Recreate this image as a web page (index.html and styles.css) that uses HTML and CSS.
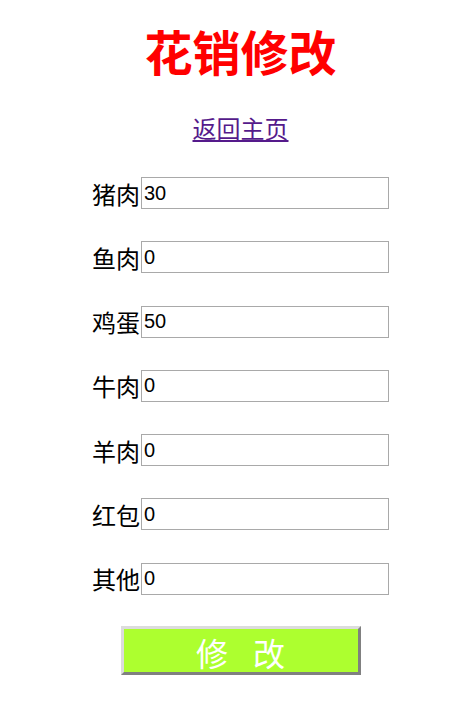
FILE: index.html
```html
<!DOCTYPE html>
<html lang="zh-CN">

<head>
    <meta charset="UTF-8">
    <meta name="viewport" content="width=device-width, initial-scale=1.0">
    <title>花销修改</title>
    <link rel="stylesheet" href="styles.css">
</head>

<body>

    <div class="container">
        <h1>花销修改</h1>
        <a class="home-link" href="#">返回主页</a>

        <form class="cost-form">
            <div class="row"><label>猪肉</label><input type="text" value="30"></div>
            <div class="row"><label>鱼肉</label><input type="text" value="0"></div>
            <div class="row"><label>鸡蛋</label><input type="text" value="50"></div>
            <div class="row"><label>牛肉</label><input type="text" value="0"></div>
            <div class="row"><label>羊肉</label><input type="text" value="0"></div>
            <div class="row"><label>红包</label><input type="text" value="0"></div>
            <div class="row"><label>其他</label><input type="text" value="0"></div>
            <button type="button" class="submit">修&nbsp;改</button>
        </form>
    </div>

</body>

</html>
```

FILE: styles.css
```css
body {
    font-family: "Liberation Sans", "Noto Sans CJK SC", sans-serif;
    margin: 8px;
}

.container {
    padding-left: 24px;
    text-align: center;
}

h1 {
    color: red;
    font-size: 48px;
    font-weight: bold;
    margin: 12px 0 0;
    line-height: 70px;
}

.home-link {
    display: inline-block;
    margin-top: 25px;
    font-size: 24px;
    line-height: 30px;
    color: #551a8b;
}

.cost-form {
    margin-top: 32px;
}

.row {
    display: flex;
    justify-content: center;
    align-items: center;
    height: 32px;
    margin-bottom: 32.3px;
}

.row label {
    font-size: 24px;
    color: #000;
}

.row input {
    box-sizing: border-box;
    width: 248px;
    height: 32px;
    margin-left: 1px;
    padding: 1px 2px;
    border: 1px solid #a9a9a9;
    font-family: "Liberation Sans", sans-serif;
    font-size: 20px;
    color: #000;
}

.submit {
    box-sizing: border-box;
    width: 240px;
    height: 49px;
    margin-top: -1px;
    padding: 0 0 0 8px;
    background: #adff2f;
    color: #fff;
    font-size: 32px;
    letter-spacing: 8px;
    border: 3px solid;
    border-color: #dcdcdc #808080 #808080 #dcdcdc;
    font-family: "Liberation Sans", "Noto Sans CJK SC", sans-serif;
}
```
